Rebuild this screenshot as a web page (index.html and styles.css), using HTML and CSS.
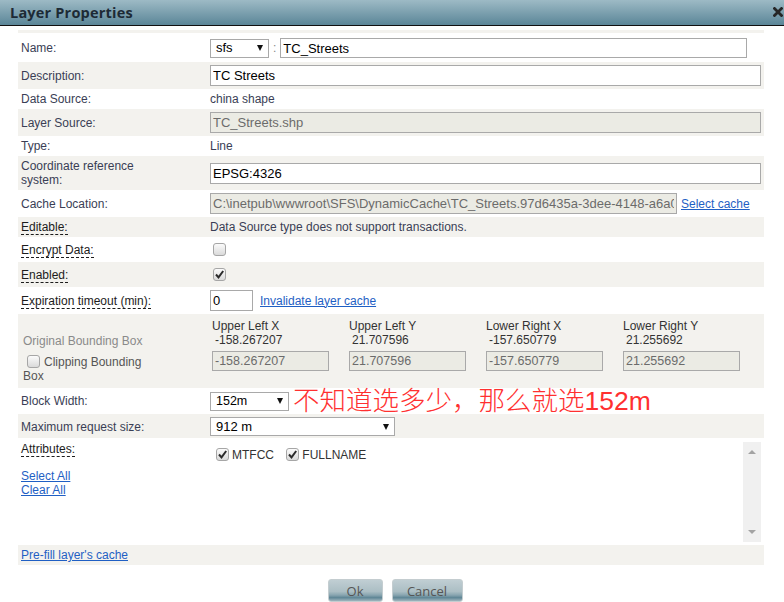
FILE: index.html
```
<!DOCTYPE html>
<html>
<head>
<meta charset="utf-8">
<title>Layer Properties</title>
<link rel="stylesheet" href="styles.css">
</head>
<body>
<div class="dialog">
  <div class="titlebar">
    <span class="title">Layer Properties</span>
    <span class="close"><svg width="10" height="10" viewBox="0 0 10 10"><path d="M1.5 1.5 L8.5 8.5 M8.5 1.5 L1.5 8.5" stroke="#262626" stroke-width="2.8" stroke-linecap="square"/></svg></span>
  </div>
  <div class="content">
    <div class="form">
      <div class="band"></div>

      <div class="row row-name">
        <div class="label">Name:</div>
        <div class="value name-value">
          <div class="select select-ns"><span>sfs</span><i class="arrow"></i></div>
          <span class="colon">:</span>
          <input class="input input-name" type="text" value="TC_Streets">
        </div>
      </div>

      <div class="row">
        <div class="label">Description:</div>
        <div class="value"><input class="input input-wide" type="text" value="TC Streets"></div>
      </div>

      <div class="row">
        <div class="label">Data Source:</div>
        <div class="value">china shape</div>
      </div>

      <div class="row">
        <div class="label">Layer Source:</div>
        <div class="value"><input class="input input-wide disabled" type="text" value="TC_Streets.shp" disabled></div>
      </div>

      <div class="row">
        <div class="label">Type:</div>
        <div class="value">Line</div>
      </div>

      <div class="row">
        <div class="label">Coordinate reference system:</div>
        <div class="value"><input class="input input-wide" type="text" value="EPSG:4326"></div>
      </div>

      <div class="row">
        <div class="label">Cache Location:</div>
        <div class="value cache-value">
          <input class="input input-cache disabled" type="text" value="C:\inetpub\wwwroot\SFS\DynamicCache\TC_Streets.97d6435a-3dee-4148-a6a0-1c2f5b7e8d90" disabled>
          <a class="link" href="#">Select cache</a>
        </div>
      </div>

      <div class="row">
        <div class="label"><span class="hint">Editable:</span></div>
        <div class="value">Data Source type does not support transactions.</div>
      </div>

      <div class="row">
        <div class="label"><span class="hint">Encrypt Data:</span></div>
        <div class="value"><span class="cb"></span></div>
      </div>

      <div class="row">
        <div class="label"><span class="hint">Enabled:</span></div>
        <div class="value"><span class="cb checked"><svg width="11" height="11" viewBox="0 0 11 11"><path d="M2 5.5 L4.5 8.3 L9.2 2" fill="none" stroke="#2b2b2b" stroke-width="2"/></svg></span></div>
      </div>

      <div class="row">
        <div class="label"><span class="hint">Expiration timeout (min):</span></div>
        <div class="value cache-value">
          <input class="input input-small" type="text" value="0">
          <a class="link" href="#">Invalidate layer cache</a>
        </div>
      </div>

      <div class="row row-bbox">
        <div class="label bbox-label">
          <div class="muted">Original Bounding Box</div>
          <div class="clip"><span class="cb cb-inline"></span>Clipping Bounding Box</div>
        </div>
        <div class="value bbox-grid">
          <div class="bb-col">
            <div class="bb-head">Upper Left X</div>
            <div class="bb-val">-158.267207</div>
            <input class="input input-bb disabled" type="text" value="-158.267207" disabled>
          </div>
          <div class="bb-col">
            <div class="bb-head">Upper Left Y</div>
            <div class="bb-val">21.707596</div>
            <input class="input input-bb disabled" type="text" value="21.707596" disabled>
          </div>
          <div class="bb-col">
            <div class="bb-head">Lower Right X</div>
            <div class="bb-val">-157.650779</div>
            <input class="input input-bb disabled" type="text" value="-157.650779" disabled>
          </div>
          <div class="bb-col">
            <div class="bb-head">Lower Right Y</div>
            <div class="bb-val">21.255692</div>
            <input class="input input-bb disabled" type="text" value="21.255692" disabled>
          </div>
        </div>
      </div>

      <div class="row row-block">
        <div class="label">Block Width:</div>
        <div class="value block-value">
          <div class="select select-block"><span>152m</span><i class="arrow"></i></div>
          <span class="note">不知道选多少，那么就选152m</span>
        </div>
      </div>

      <div class="row row-max">
        <div class="label">Maximum request size:</div>
        <div class="value"><div class="select select-max"><span>912 m</span><i class="arrow"></i></div></div>
      </div>

      <div class="row row-attr">
        <div class="label attr-label">
          <div class="attr-title"><span class="hint">Attributes:</span></div>
          <a class="link block-link" href="#">Select All</a>
          <a class="link block-link" href="#">Clear All</a>
        </div>
        <div class="value attr-box">
          <div class="attr-items">
            <span class="cb cb-attr checked"><svg width="11" height="11" viewBox="0 0 11 11"><path d="M2 5.5 L4.5 8.3 L9.2 2" fill="none" stroke="#2b2b2b" stroke-width="2"/></svg></span><span class="attr-name">MTFCC</span>
            <span class="cb cb-attr checked"><svg width="11" height="11" viewBox="0 0 11 11"><path d="M2 5.5 L4.5 8.3 L9.2 2" fill="none" stroke="#2b2b2b" stroke-width="2"/></svg></span><span class="attr-name">FULLNAME</span>
          </div>
          <div class="scrollbar">
            <i class="sb-up"></i>
            <i class="sb-down"></i>
          </div>
        </div>
      </div>

      <div class="row">
        <div class="label"><a class="link" href="#">Pre-fill layer's cache</a></div>
        <div class="value"></div>
      </div>
    </div>

    <div class="buttons">
      <button class="btn btn-ok">Ok</button>
      <button class="btn btn-cancel">Cancel</button>
    </div>
  </div>
</div>
</body>
</html>
```

FILE: styles.css
```
* { box-sizing: border-box; }

body {
  margin: 0;
  background: #ffffff;
  font-family: "Liberation Sans", Arial, sans-serif;
  font-size: 12px;
  color: #3a3e55;
}

.titlebar {
  height: 26px;
  background: linear-gradient(#9dbac5, #5b8698);
  border-bottom: 1px solid #111;
  display: flex;
  align-items: center;
  justify-content: space-between;
  padding: 0 1px 0 10px;
}

.title {
  font-family: "Open Sans", sans-serif;
  font-weight: 700;
  font-size: 14.5px;
  letter-spacing: 0.2px;
  color: #1d2a35;
}

.close { display: flex; margin-top: -1px; }

.content { padding: 4px 20px 0 18px; }

.band { height: 3px; }

.form > :nth-child(odd) { background: #f3f2ee; }

.row {
  display: grid;
  grid-template-columns: 189px 1fr;
  align-items: center;
  padding: 3px 0;
  line-height: 14px;
}

.label { padding: 0 45px 0 3px; }
.value { padding-left: 3px; }

.hint {
  color: #1c1c1c;
  border-bottom: 1px dashed #1c1c1c;
}

.row-name { padding: 5px 0 4px; }

.name-value { display: flex; align-items: center; }

.input {
  height: 21px;
  border: 1px solid #a9a9a9;
  background: #fff;
  font-family: "Liberation Sans", Arial, sans-serif;
  font-size: 13px;
  color: #000;
  padding: 0 2px;
  margin: 0;
  display: block;
}

.input.disabled { background: #ebebe4; color: #6b6b6b; }

.input-name { width: 467px; height: 20px; }
.input-wide { width: 551px; }
.input-cache { width: 467px; }
.input-small { width: 43px; }

.colon { color: #888; margin: 0 4px 0 4px; }

.cache-value { display: flex; align-items: center; gap: 4px; }
.cache-value .input-small + .link { margin-left: 3px; }

.link { color: #1f5fc4; text-decoration: underline; }

.select {
  display: inline-flex;
  align-items: center;
  justify-content: space-between;
  height: 19px;
  border: 1px solid #a9a9a9;
  background: #fff;
  color: #000;
  font-size: 13px;
  padding: 0 5px 0 5px;
}

.select-ns { width: 59px; }
.select-block { width: 79px; font-size: 12.5px; }
.select-max { width: 185px; height: 19px; font-size: 13px; }

.arrow {
  width: 0;
  height: 0;
  border-left: 3.5px solid transparent;
  border-right: 3.5px solid transparent;
  border-top: 6px solid #111;
}

.cb {
  display: inline-block;
  width: 13px;
  height: 13px;
  border: 1px solid #a6a6a6;
  border-radius: 3px;
  background: linear-gradient(#fbfbfb, #dadada);
  margin: 3px 3px 3px 3px;
  vertical-align: middle;
  position: relative;
}

.cb svg { position: absolute; left: 0; top: 0; }

/* bounding box */
.row-bbox { align-items: start; padding: 5px 0 0; }

.bbox-label { padding: 15px 45px 0 5px; }
.muted { color: #8a8a8a; white-space: nowrap; }
.clip { color: #555; margin-top: 7px; }
.cb-inline { margin: 0 4px 0 4px; vertical-align: -2px; }

.bbox-grid {
  display: grid;
  grid-template-columns: repeat(4, 137px);
  padding: 0 0 17px 5px;
  color: #333;
}

.bb-val { padding-left: 3px; }
.input-bb { width: 117px; height: 20px; margin-top: 4px; font-size: 12.5px; }

/* block width */
.block-value { display: flex; align-items: center; height: 20px; }
.note {
  margin-left: 4px;
  font-family: "Liberation Sans", "Noto Sans CJK SC", sans-serif;
  font-size: 26.5px;
  line-height: 20px;
  color: #ff3030;
  font-weight: 300;
  white-space: nowrap;
}

.row-max { padding: 3px 0 2px; }

/* attributes */
.row-attr { align-items: start; padding: 4px 0 3px; }
.attr-title { margin-bottom: 13px; }
.block-link { display: block; width: max-content; }

.attr-box {
  display: flex;
  height: 100px;
  width: 554px;
}

.attr-items { flex: 1; padding: 6px 0 0 3px; line-height: 13px; }
.cb-attr { margin: 0 3px 0 3px; vertical-align: top; }
.attr-name { color: #333; margin-right: 6px; font-size: 12px; line-height: 14px; }

.scrollbar {
  width: 18px;
  background: #f0f0f0;
  display: flex;
  flex-direction: column;
  justify-content: space-between;
  align-items: center;
  padding: 8px 0 8px;
}

.sb-up {
  width: 0; height: 0;
  border-left: 4px solid transparent;
  border-right: 4px solid transparent;
  border-bottom: 4px solid #a3a3a3;
}
.sb-down {
  width: 0; height: 0;
  border-left: 4px solid transparent;
  border-right: 4px solid transparent;
  border-top: 4px solid #a3a3a3;
}

/* buttons */
.buttons {
  display: flex;
  justify-content: center;
  gap: 9px;
  margin-top: 14px;
  padding-left: 8px;
}

.btn {
  height: 23px;
  border: 1px solid #c4cdd0;
  border-radius: 3px;
  background: linear-gradient(#c0ced3 0%, #abbec4 55%, #88a5b0 72%, #5f8696 84%, #9fb5bd 100%);
  font-family: "Open Sans", sans-serif;
  font-size: 13px;
  color: #555;
  padding: 0;
  line-height: 20px;
}

.btn-ok { width: 55px; }
.btn-cancel { width: 71px; }
```
